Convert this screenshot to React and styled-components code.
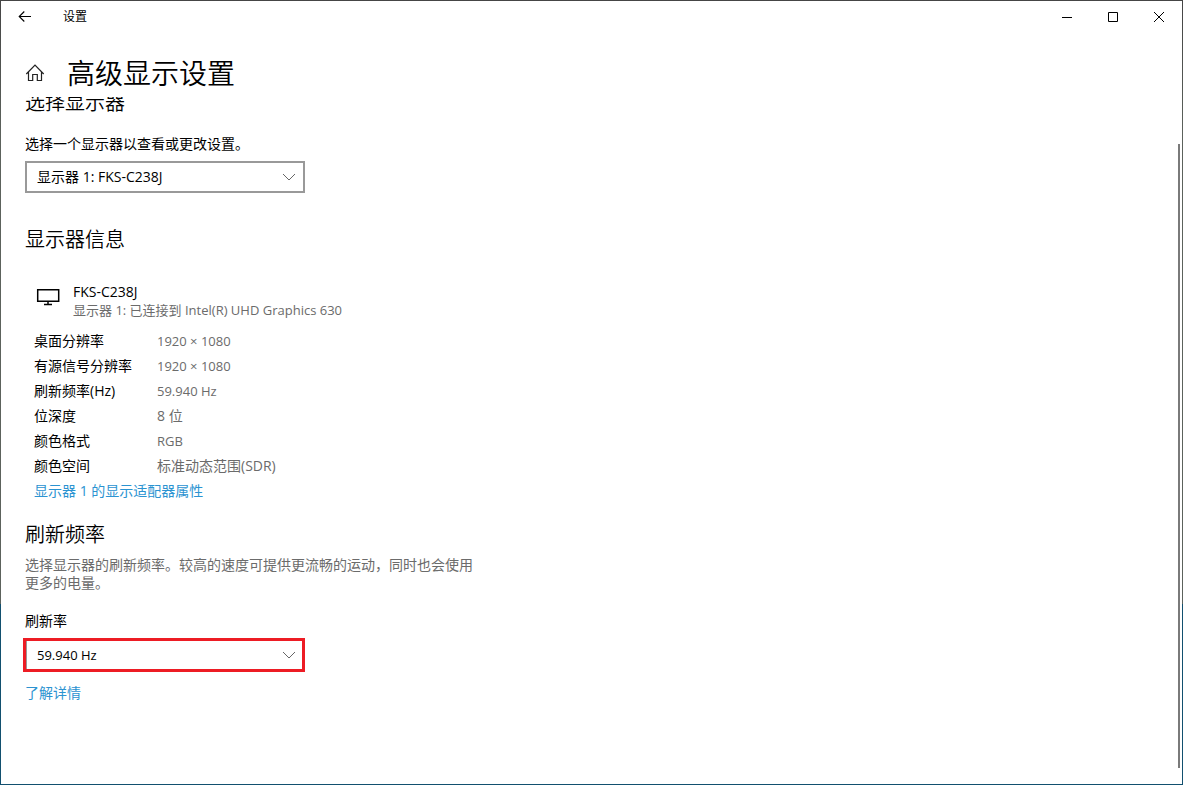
import { useState } from "react";
import styled, { createGlobalStyle } from "styled-components";

const GlobalStyle = createGlobalStyle`
  * {
    box-sizing: border-box;
  }
  body {
    margin: 0;
    background: #fff;
    color: #000;
    font-family: "Open Sans", "Noto Sans CJK SC", sans-serif;
    font-size: 14px;
    line-height: 18px;
  }
  button, select {
    font: inherit;
    color: inherit;
  }
`;

const Frame = styled.div`
  display: flex;
  min-height: 100vh;
  padding: 1px;
  background: linear-gradient(
    #454545 0,
    #5c625c 17%,
    #5c625c 77%,
    #12506f 77%,
    #12506f 100%
  );
`;

const Window = styled.div`
  flex: 1;
  display: flex;
  flex-direction: column;
  background: #fff;
`;

const TitleBar = styled.div`
  display: flex;
  align-items: center;
  height: 32px;
`;

const BarButton = styled.button`
  display: flex;
  align-items: center;
  justify-content: center;
  width: ${(props) => (props.$wide ? "48px" : "46px")};
  height: 32px;
  padding: 0;
  border: none;
  background: none;

  &:hover {
    background: #e5e5e5;
  }
`;

const AppName = styled.span`
  flex: 1;
  padding-left: 14px;
  font-size: 12px;
  line-height: 20px;
`;

const Header = styled.header`
  display: flex;
  align-items: center;
  gap: 22px;
  height: 64px;
  padding: 16px 24px 0;
`;

const HomeLink = styled.a`
  display: flex;
  color: #000;
`;

const Title = styled.h1`
  margin: 0;
  font-size: 28px;
  font-weight: 350;
  line-height: 36px;
`;

const Body = styled.div`
  flex: 1;
  display: flex;
`;

const Content = styled.main`
  flex: 1;
  padding: 0 24px 24px;
  overflow: hidden;
`;

// the page is scrolled a little, so the first section slides under the header
const Scrolled = styled.div`
  margin-top: -6px;
`;

const ScrollThumb = styled.div`
  width: 2px;
  margin: 47px 2px 16px 0;
  background: #7a7a7a;
`;

const Section = styled.section`
  margin-bottom: ${(props) => props.$gap}px;
`;

const SectionTitle = styled.h2`
  margin: 0;
  font-size: 20px;
  font-weight: 350;
  line-height: 24px;
`;

const Label = styled.label`
  display: block;
  margin: 20px 0 8px;
`;

const SelectBox = styled.div`
  display: grid;
  grid-template-columns: 1fr;
  align-items: center;
  width: ${(props) => (props.$marked ? "282px" : "280px")};
  margin-left: ${(props) => (props.$marked ? "-2px" : "0")};

  > * {
    grid-area: 1 / 1;
  }
  > svg {
    justify-self: end;
    margin-right: 9px;
    pointer-events: none;
  }
`;

const Select = styled.select`
  width: 100%;
  height: ${(props) => (props.$marked ? "34px" : "32px")};
  padding: 0 32px 0 ${(props) => (props.$marked ? "11px" : "10px")};
  border: ${(props) => (props.$marked ? "3px solid #ed1c24" : "2px solid #999")};
  border-radius: 0;
  box-shadow: ${(props) => (props.$marked ? "inset 1px 0 #999" : "none")};
  background: #fff;
  appearance: none;
  font-size: ${(props) => (props.$marked ? "13px" : "14px")};
`;

const Device = styled.div`
  display: flex;
  gap: 13px;
  margin: 31px 0 9px;
  padding-left: 11px;

  > svg {
    margin-top: 5px;
  }
`;

const DeviceName = styled.div``;

const DeviceDetail = styled.div`
  font-size: 13px;
  color: #6b6b6b;
`;

const Specs = styled.table`
  margin-left: 9px;
  border-collapse: collapse;
`;

const SpecName = styled.th`
  width: 123px;
  height: 25px;
  padding: 0;
  text-align: left;
  font-weight: 400;
`;

const SpecValue = styled.td`
  padding: 0;
  font-size: ${(props) => (props.$text ? "14px" : "13px")};
  color: #6b6b6b;
`;

const TextLink = styled.a`
  display: block;
  width: fit-content;
  margin-left: ${(props) => (props.$indent ? "9px" : "0")};
  line-height: 25px;
  color: #2b93d1;
  text-decoration: none;
`;

const Hint = styled.p`
  max-width: 450px;
  margin: 9px 0 20px;
  color: #6b6b6b;
`;

const LearnMore = styled(TextLink)`
  margin-top: 8px;
`;

const BackIcon = () => (
  <svg width="14" height="12" viewBox="0 0 14 12" fill="none" stroke="#000">
    <path d="M1 5.5H13M6.3 .5L1.2 5.5l5.1 5" strokeWidth="1.1" />
  </svg>
);

const HomeIcon = () => (
  <svg width="20" height="20" viewBox="0 0 20 20" fill="none" stroke="#222">
    <path
      d="M1.3 11L10 2.2 18.7 11M3.5 9v8.5h4.2v-6h4.6v6h4.2V9"
      strokeWidth="1.2"
    />
  </svg>
);

const MonitorIcon = () => (
  <svg width="24" height="18" viewBox="0 0 24 18" fill="none" stroke="#000">
    <path d="M1.7 1.7h21v11.6h-21zM12 13.5v3M8 16.5h8" strokeWidth="1.5" />
  </svg>
);

const ChevronIcon = () => (
  <svg width="14" height="8" viewBox="0 0 14 8" fill="none" stroke="#666">
    <path d="M1 1l6 6 6-6" />
  </svg>
);

const specs = [
  { name: "桌面分辨率", value: "1920 × 1080" },
  { name: "有源信号分辨率", value: "1920 × 1080" },
  { name: "刷新频率(Hz)", value: "59.940 Hz" },
  { name: "位深度", value: "8 位", text: true },
  { name: "颜色格式", value: "RGB" },
  { name: "颜色空间", value: "标准动态范围(SDR)", text: true },
];

const Dropdown = ({ id, options, marked }) => {
  const [value, setValue] = useState(options[0]);

  return (
    <SelectBox $marked={marked}>
      <Select
        id={id}
        value={value}
        onChange={(e) => setValue(e.target.value)}
        $marked={marked}
      >
        {options.map((option) => (
          <option key={option}>{option}</option>
        ))}
      </Select>
      <ChevronIcon />
    </SelectBox>
  );
};

const App = () => {
  return (
    <Frame>
      <GlobalStyle />
      <Window>
        <TitleBar>
          <BarButton $wide aria-label="返回">
            <BackIcon />
          </BarButton>
          <AppName>设置</AppName>
          <BarButton aria-label="最小化">
            <svg width="10" height="10" stroke="#000">
              <path d="M0 5.5h10" />
            </svg>
          </BarButton>
          <BarButton aria-label="最大化">
            <svg width="10" height="10" fill="none" stroke="#000">
              <path d="M.5 .5h9v9h-9z" />
            </svg>
          </BarButton>
          <BarButton aria-label="关闭">
            <svg width="10" height="10" stroke="#000">
              <path d="M0 0l10 10M10 0L0 10" />
            </svg>
          </BarButton>
        </TitleBar>
        <Header>
          <HomeLink href="#home" aria-label="主页">
            <HomeIcon />
          </HomeLink>
          <Title>高级显示设置</Title>
        </Header>
        <Body>
          <Content>
            <Scrolled>
              <Section $gap={35}>
                <SectionTitle>选择显示器</SectionTitle>
                <Label htmlFor="display">选择一个显示器以查看或更改设置。</Label>
                <Dropdown id="display" options={["显示器 1: FKS-C238J"]} />
              </Section>
              <Section $gap={20}>
                <SectionTitle>显示器信息</SectionTitle>
                <Device>
                  <MonitorIcon />
                  <div>
                    <DeviceName>FKS-C238J</DeviceName>
                    <DeviceDetail>
                      显示器 1: 已连接到 Intel(R) UHD Graphics 630
                    </DeviceDetail>
                  </div>
                </Device>
                <Specs>
                  <tbody>
                    {specs.map((spec) => (
                      <tr key={spec.name}>
                        <SpecName scope="row">{spec.name}</SpecName>
                        <SpecValue $text={spec.text}>{spec.value}</SpecValue>
                      </tr>
                    ))}
                  </tbody>
                </Specs>
                <TextLink href="#adapter" $indent>
                  显示器 1 的显示适配器属性
                </TextLink>
              </Section>
              <Section $gap={0}>
                <SectionTitle>刷新频率</SectionTitle>
                <Hint>
                  选择显示器的刷新频率。较高的速度可提供更流畅的运动，同时也会使用更多的电量。
                </Hint>
                <Label htmlFor="rate">刷新率</Label>
                <Dropdown id="rate" options={["59.940 Hz"]} marked />
                <LearnMore href="#more">了解详情</LearnMore>
              </Section>
            </Scrolled>
          </Content>
          <ScrollThumb />
        </Body>
      </Window>
    </Frame>
  );
};

export default App;
